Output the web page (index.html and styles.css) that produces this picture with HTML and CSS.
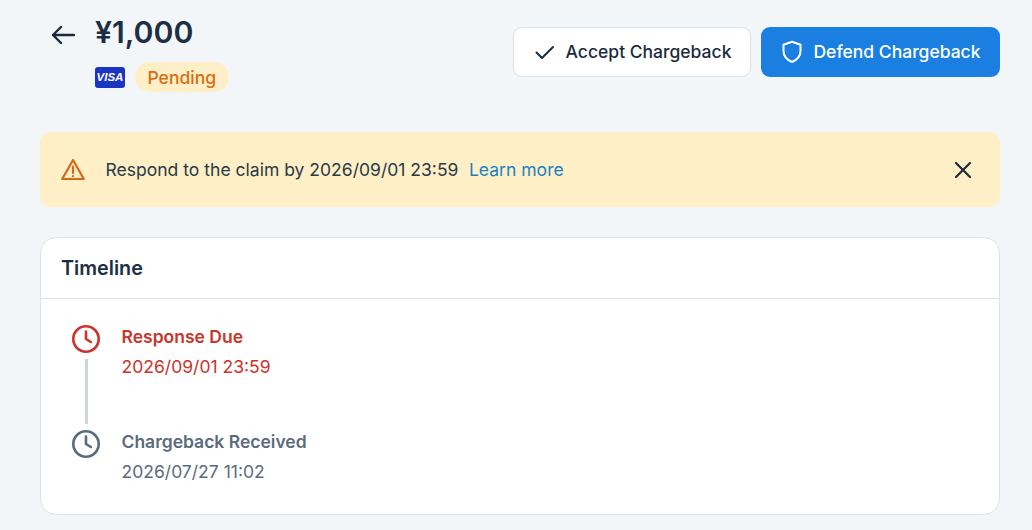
FILE: index.html
```html
<!DOCTYPE html>
<html lang="en">
<head>
<meta charset="utf-8">
<title>Chargeback</title>
<link rel="stylesheet" href="styles.css">
</head>
<body>
<main class="page">
  <header class="head">
    <div class="head-left">
      <button class="back" aria-label="Back">
        <svg width="24" height="24" viewBox="0 0 24 24" fill="none" stroke="currentColor" stroke-width="2.400" stroke-linecap="round" stroke-linejoin="round"><path d="M23 12H2M10 4 2 12l8 8"/></svg>
      </button>
      <div class="summary">
        <h1 class="amount">¥1,000</h1>
        <div class="meta">
          <span class="visa">VISA</span>
          <span class="pill">Pending</span>
        </div>
      </div>
    </div>
    <div class="actions">
      <button class="btn btn-light">
        <svg width="24" height="24" viewBox="0 0 24 24" fill="none" stroke="currentColor" stroke-width="2" stroke-linecap="round" stroke-linejoin="round"><path d="M3.500 12.500 9 18 20 7"/></svg>
        Accept Chargeback
      </button>
      <button class="btn btn-primary">
        <svg width="24" height="24" viewBox="0 0 24 24" fill="none" stroke="currentColor" stroke-width="2" stroke-linecap="round" stroke-linejoin="round"><path d="M12 1.800 20.500 4.800V11c0 5.200-3.400 8.800-8.500 11C6.900 19.800 3.500 16.200 3.500 11V4.800Z"/></svg>
        Defend Chargeback
      </button>
    </div>
  </header>

  <section class="alert">
    <svg class="alert-icon" width="26" height="26" viewBox="0 0 26 26" fill="none" stroke="currentColor" stroke-width="2.200" stroke-linecap="round" stroke-linejoin="round"><path d="M13 3 23.800 22H2.200Z"/><path d="M13 9.500v6.500M13 19v.2"/></svg>
    <p class="alert-text">Respond to the claim by 2026/09/01 23:59<a class="alert-link" href="#">Learn more</a></p>
    <button class="close" aria-label="Close">
      <svg width="24" height="24" viewBox="0 0 24 24" fill="none" stroke="currentColor" stroke-width="2.200" stroke-linecap="round"><path d="M5 5l14 14M19 5 5 19"/></svg>
    </button>
  </section>

  <section class="card">
    <h2 class="card-title">Timeline</h2>
    <ol class="timeline">
      <li class="event event-due">
        <div class="rail">
          <svg width="30" height="30" viewBox="0 0 30 30" fill="none" stroke="currentColor" stroke-width="2.600" stroke-linecap="round" stroke-linejoin="round"><circle cx="15" cy="15" r="12.700"/><path d="M15 7.500V15l4.800 3"/></svg>
          <span class="line"></span>
        </div>
        <div class="event-body">
          <div class="event-title">Response Due</div>
          <div class="event-date">2026/09/01 23:59</div>
        </div>
      </li>
      <li class="event event-past">
        <div class="rail">
          <svg width="30" height="30" viewBox="0 0 30 30" fill="none" stroke="currentColor" stroke-width="2.600" stroke-linecap="round" stroke-linejoin="round"><circle cx="15" cy="15" r="12.700"/><path d="M15 7.500V15l4.800 3"/></svg>
        </div>
        <div class="event-body">
          <div class="event-title">Chargeback Received</div>
          <div class="event-date">2026/07/27 11:02</div>
        </div>
      </li>
    </ol>
  </section>
</main>
</body>
</html>
```

FILE: styles.css
```css
* { box-sizing: border-box; }
html, body { margin: 0; height: 100%; }
body {
  background: #f3f6f9;
  color: #1b2b3d;
  font-family: Inter, "Liberation Sans", sans-serif;
  overflow: hidden;
}
.page { padding: 0 32px 0 40px; }
button { font: inherit; cursor: pointer; }

.head {
  display: flex;
  justify-content: space-between;
  align-items: flex-start;
  height: 132px;
  padding-top: 11px;
}
.head-left { display: flex; align-items: flex-start; }
.back {
  display: flex;
  border: 0;
  background: none;
  padding: 0;
  margin: 12px 20px 0 11px;
  color: #1b2b3d;
}
.amount {
  margin: 0;
  font-size: 30.200px;
  line-height: 42px;
  font-weight: 600;
  color: #1b2f45;
}
.meta { display: flex; align-items: center; gap: 10px; margin-top: 9px; }
.visa {
  width: 30px;
  height: 21px;
  border-radius: 3px;
  background: #1a35c4;
  color: #fff;
  font-family: "Liberation Sans", sans-serif;
  font-size: 11.500px;
  font-weight: 700;
  font-style: italic;
  line-height: 21px;
  text-align: center;
}
.pill {
  height: 30px;
  padding: 1px 12.500px 0;
  border-radius: 15px;
  background: #feefc7;
  color: #d66e13;
  font-size: 17.500px;
  font-weight: 500;
  line-height: 30px;
}

.actions { display: flex; gap: 10px; padding-top: 16px; }
.btn {
  display: flex;
  align-items: center;
  justify-content: center;
  gap: 9px;
  height: 50px;
  padding-bottom: 2px;
  border-radius: 9px;
  font-size: 17.500px;
  font-weight: 500;
  white-space: nowrap;
}
.btn-light {
  width: 238px;
  background: #fff;
  border: 1.500px solid #dde3ea;
  color: #1b2b3d;
}
.btn-primary {
  width: 239px;
  background: #1a7fe0;
  border: 0;
  color: #fff;
}

.alert {
  display: flex;
  align-items: center;
  height: 75px;
  padding: 0 25px 0 20px;
  border-radius: 10px;
  background: #feefc7;
  color: #2a3a46;
}
.alert-icon { color: #d2691b; flex: none; }
.alert-text { flex: 1; margin: 0 0 0 19.500px; font-size: 17.550px; }
.alert-link { margin-left: 10.500px; color: #1a82c4; text-decoration: none; }
.close { display: flex; border: 0; background: none; padding: 0; color: #1b2b3d; }

.card {
  margin-top: 30px;
  height: 278px;
  background: #fff;
  border: 1px solid #dde3ea;
  border-radius: 16px;
}
.card-title {
  margin: 0;
  height: 61px;
  padding: 0 20px;
  border-bottom: 1px solid #dde3ea;
  font-size: 19.800px;
  font-weight: 600;
  line-height: 61px;
  color: #1b2f45;
}
.timeline { list-style: none; margin: 0; padding: 25px 0 0 30px; }
.event { display: flex; gap: 20.500px; height: 105px; }
.event-due { color: #c8352b; }
.event-past { color: #5b6b7c; }
.rail { display: flex; flex-direction: column; align-items: center; width: 30px; gap: 5px; flex: none; }
.line { width: 3px; height: 65px; background: #cdd6e0; }
.event-body { padding-top: 1px; }
.event-title { font-size: 17.500px; font-weight: 600; line-height: 24px; }
.event-date { margin-top: 6px; font-size: 17.550px; line-height: 24px; }
```
